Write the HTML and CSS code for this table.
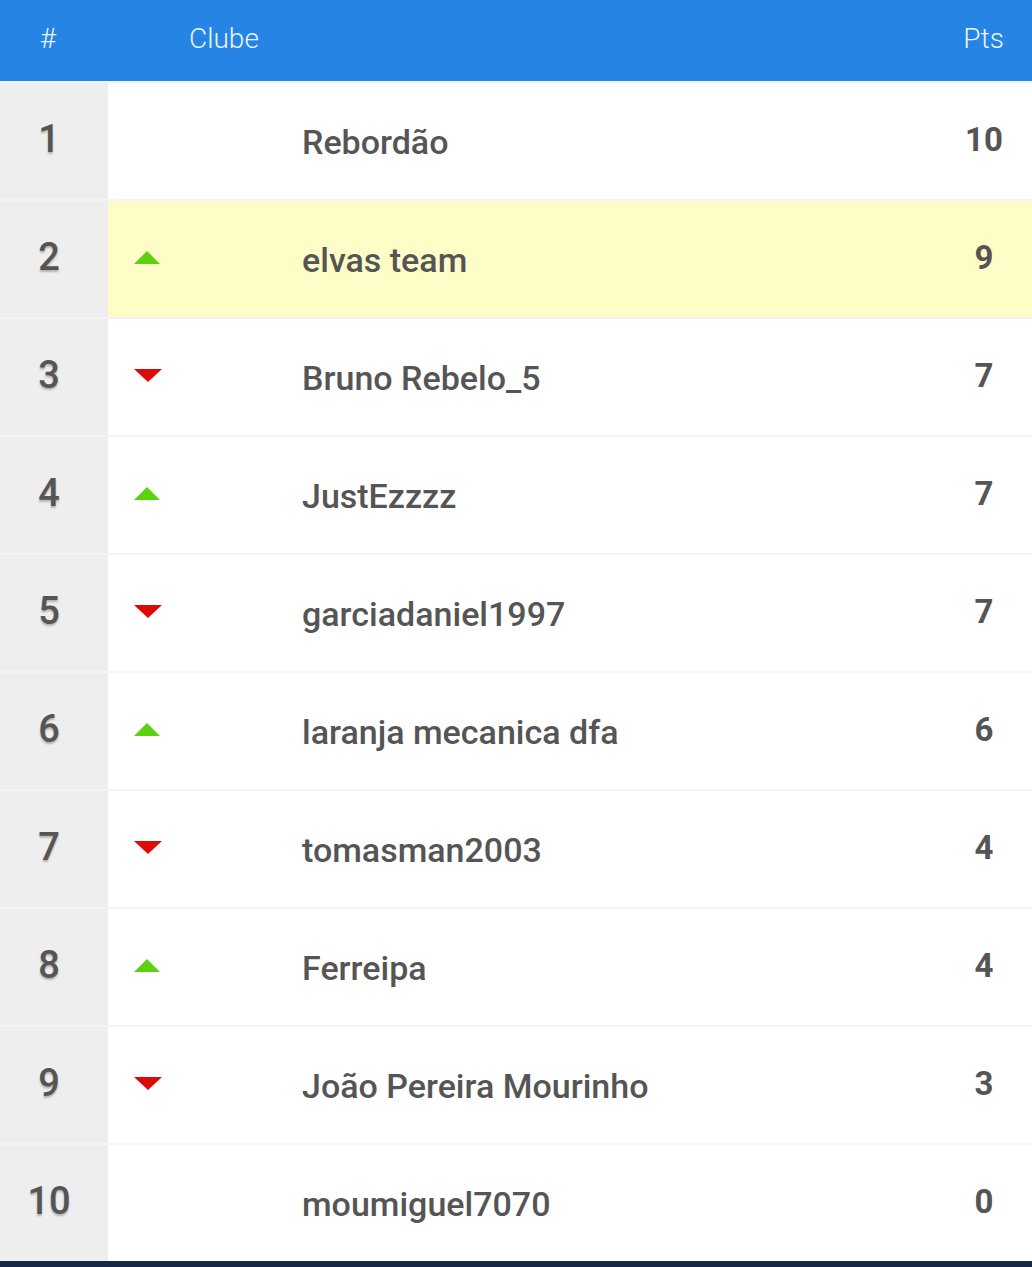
FILE: index.html
```html
<!DOCTYPE html>
<html>
<head>
<meta charset="utf-8">
<link rel="stylesheet" href="styles.css">
</head>
<body>
<div class="table">
  <div class="head">
    <div class="h-num">#</div>
    <div class="h-club">Clube</div>
    <div class="h-pts">Pts</div>
  </div>
  <div class="row">
    <div class="pos">1</div>
    <div class="main"><div class="trend"></div><div class="name">Rebordão</div><div class="pts">10</div></div>
  </div>
  <div class="row hl">
    <div class="pos">2</div>
    <div class="main"><div class="trend"><span class="up"></span></div><div class="name">elvas team</div><div class="pts">9</div></div>
  </div>
  <div class="row">
    <div class="pos">3</div>
    <div class="main"><div class="trend"><span class="down"></span></div><div class="name">Bruno Rebelo_5</div><div class="pts">7</div></div>
  </div>
  <div class="row">
    <div class="pos">4</div>
    <div class="main"><div class="trend"><span class="up"></span></div><div class="name">JustEzzzz</div><div class="pts">7</div></div>
  </div>
  <div class="row">
    <div class="pos">5</div>
    <div class="main"><div class="trend"><span class="down"></span></div><div class="name">garciadaniel1997</div><div class="pts">7</div></div>
  </div>
  <div class="row">
    <div class="pos">6</div>
    <div class="main"><div class="trend"><span class="up"></span></div><div class="name">laranja mecanica dfa</div><div class="pts">6</div></div>
  </div>
  <div class="row">
    <div class="pos">7</div>
    <div class="main"><div class="trend"><span class="down"></span></div><div class="name">tomasman2003</div><div class="pts">4</div></div>
  </div>
  <div class="row">
    <div class="pos">8</div>
    <div class="main"><div class="trend"><span class="up"></span></div><div class="name">Ferreipa</div><div class="pts">4</div></div>
  </div>
  <div class="row">
    <div class="pos">9</div>
    <div class="main"><div class="trend"><span class="down"></span></div><div class="name">João Pereira Mourinho</div><div class="pts">3</div></div>
  </div>
  <div class="row">
    <div class="pos">10</div>
    <div class="main"><div class="trend"></div><div class="name">moumiguel7070</div><div class="pts">0</div></div>
  </div>
</div>
<div class="bottombar"></div>
</body>
</html>
```

FILE: styles.css
```css
* { box-sizing: border-box; }
html, body { margin: 0; padding: 0; background: #ffffff; }
body {
  font-family: Roboto, "Liberation Sans", sans-serif;
  width: 1032px;
  height: 1267px;
  overflow: hidden;
}
.table { display: flex; flex-direction: column; }
.head {
  height: 81px;
  background: #2584e4;
  color: #eaf4ff;
  font-weight: 300;
  font-size: 28px;
  display: flex;
  align-items: center;
  padding-bottom: 4px;
}
.h-num { width: 96px; text-align: center; }
.h-club { padding-left: 93px; flex: 1; }
.h-pts { padding-right: 28px; }
.row {
  height: 118px;
  display: flex;
  border-top: 2px solid #f3f3f3;
}
.row:first-of-type { border-top: none; }
.pos {
  width: 108px;
  background: #eeeeee;
  color: #555555;
  font-weight: 500;
  font-size: 38px;
  display: flex;
  align-items: center;
  justify-content: center;
  padding-right: 10px;
  padding-bottom: 4px;
  text-shadow: 0 2px 2px rgba(0,0,0,0.25);
}
.main {
  flex: 1;
  display: flex;
  align-items: center;
  color: #555555;
  background: #ffffff;
}
.hl .main { background: #fefdc8; }
.trend {
  width: 194px;
  padding-left: 26px;
  display: flex;
  align-items: center;
  padding-bottom: 4px;
}
.up {
  width: 0; height: 0;
  border-left: 13px solid transparent;
  border-right: 13px solid transparent;
  border-bottom: 13px solid #5bd20e;
}
.down {
  width: 0; height: 0;
  border-left: 14px solid transparent;
  border-right: 14px solid transparent;
  border-top: 13px solid #dd0a0a;
}
.name {
  flex: 1;
  font-size: 34px;
  font-weight: 500;
  padding-top: 2px;
}
.pts {
  width: 72px;
  text-align: center;
  font-size: 33px;
  font-weight: 700;
  margin-right: 12px;
  padding-bottom: 4px;
}
.bottombar {
  height: 6px;
  background: #172848;
}
```
